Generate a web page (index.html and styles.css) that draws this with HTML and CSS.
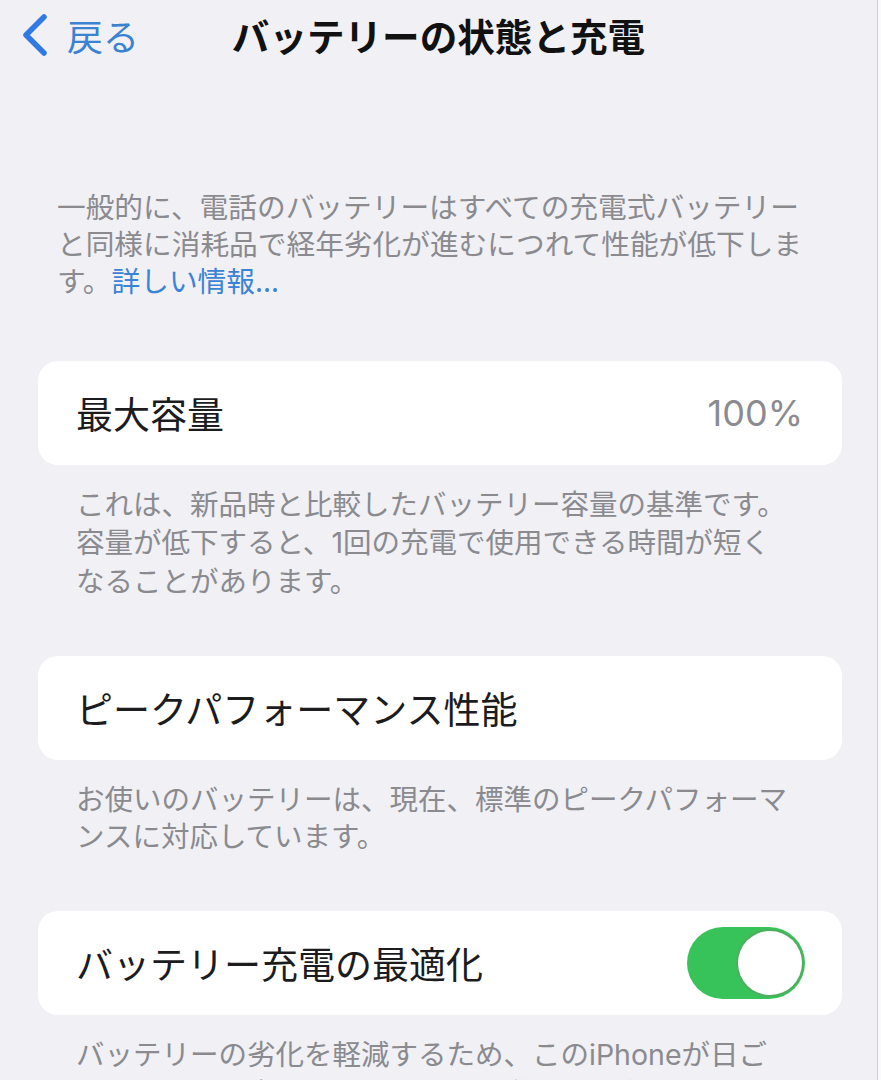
FILE: index.html
```html
<!DOCTYPE html>
<html lang="ja">
<head>
<meta charset="utf-8">
<title>バッテリーの状態と充電</title>
<link rel="stylesheet" href="styles.css">
</head>
<body>
<div class="screen">
  <header class="nav">
    <div class="back">
      <svg class="chev" width="30" height="44" viewBox="0 0 30 44" aria-hidden="true">
        <path d="M24 4 L6 22 L24 40" fill="none" stroke="#2f7ae3" stroke-width="5.5" stroke-linecap="round" stroke-linejoin="round"/>
      </svg>
      <span class="back-label">戻る</span>
    </div>
    <h1 class="title">バッテリーの状態と充電</h1>
    <div></div>
  </header>

  <p class="intro">一般的に、電話のバッテリーはすべての充電式バッテリー<br>と同様に消耗品で経年劣化が進むにつれて性能が低下しま<br>す。<span class="link">詳しい情報...</span></p>

  <section class="group first">
    <div class="card">
      <span class="label">最大容量</span>
      <span class="value">100%</span>
    </div>
    <p class="footer">これは、新品時と比較したバッテリー容量の基準です。<br>容量が低下すると、<span class="latin">1</span>回の充電で使用できる時間が短く<br>なることがあります。</p>
  </section>

  <section class="group">
    <div class="card">
      <span class="label">ピークパフォーマンス性能</span>
    </div>
    <p class="footer">お使いのバッテリーは、現在、標準のピークパフォーマ<br>ンスに対応しています。</p>
  </section>

  <section class="group">
    <div class="card">
      <span class="label">バッテリー充電の最適化</span>
      <span class="toggle"><span class="knob"></span></span>
    </div>
    <p class="footer">バッテリーの劣化を軽減するため、この<span class="latin">iPhone</span>が日ご<br>ろどのように充電されているかを学習し、次にこの</p>
  </section>
</div>
</body>
</html>
```

FILE: styles.css
```css
html, body {
  margin: 0;
  padding: 0;
  height: 1080px;
  overflow: hidden;
  background: #fafafc;
}

.screen {
  width: 877px;
  height: 1080px;
  overflow: hidden;
  background: #f0f0f5;
  border-right: 1px solid #cfcfd4;
  font-family: "Noto Sans CJK JP", "Noto Sans", sans-serif;
  color: #1c1c1e;
}

.nav {
  height: 70px;
  display: grid;
  grid-template-columns: 1fr auto 1fr;
  align-items: center;
}

.back {
  display: flex;
  align-items: center;
  padding-left: 20px;
  gap: 17px;
}

.chev {
  display: block;
}

.back-label {
  font-size: 36px;
  line-height: 44px;
  color: #3b82d0;
}

.title {
  margin: 0;
  font-size: 37.6px;
  font-weight: 700;
  line-height: 44px;
  color: #111;
  white-space: nowrap;
}

.intro {
  margin: 117px 0 0 0;
  padding-left: 57px;
  font-size: 28.7px;
  line-height: 37px;
  color: #8a8a8f;
  white-space: nowrap;
}

.link {
  color: #3a84d6;
}

.group {
  margin: 57px 35px 0 38px;
}

.group.first {
  margin-top: 63px;
}

.card {
  height: 104px;
  background: #fff;
  border-radius: 20px;
  display: flex;
  align-items: center;
  justify-content: space-between;
  padding: 0 37px 0 38px;
}

.label {
  font-size: 37px;
  line-height: 44px;
  color: #1c1c1e;
  white-space: nowrap;
}

.value {
  font-family: "Inter", "Noto Sans CJK JP", sans-serif;
  font-size: 36px;
  line-height: 44px;
  color: #8a8a8f;
  margin-right: 2px;
}

.footer {
  margin: 19px 0 0 0;
  padding-left: 38px;
  font-size: 28.5px;
  line-height: 37.5px;
  color: #8a8a8f;
  white-space: nowrap;
}

.latin {
  font-family: "Inter", "Noto Sans CJK JP", sans-serif;
}

.toggle {
  width: 118px;
  height: 72px;
  border-radius: 36px;
  background: #38c35a;
  display: flex;
  align-items: center;
  justify-content: flex-end;
  padding: 0 3px;
  box-sizing: border-box;
}

.knob {
  width: 64px;
  height: 64px;
  border-radius: 50%;
  background: #fff;
  box-shadow: 0 0 0 2px #4fae5f;
}
```
